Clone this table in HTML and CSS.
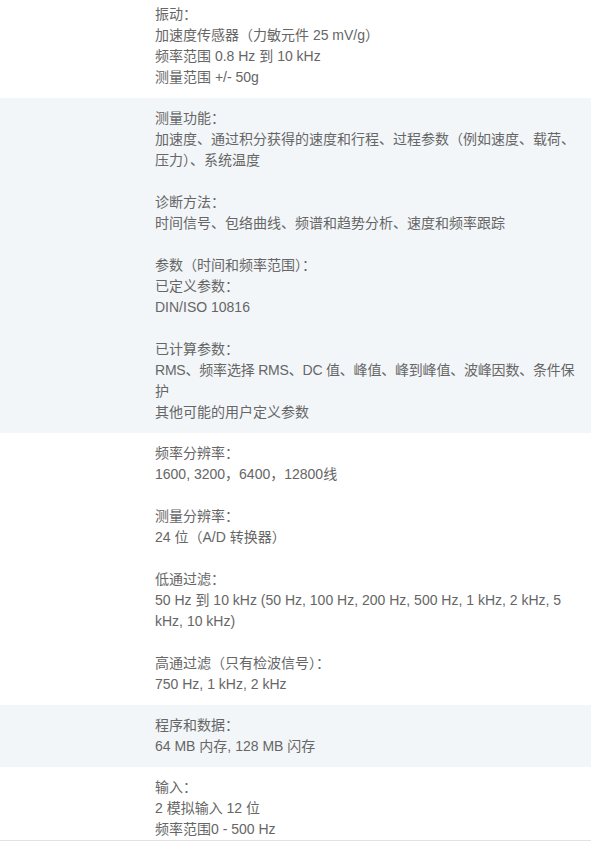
FILE: index.html
```html
<!DOCTYPE html>
<html lang="zh-CN">
  <head>
    <meta charset="UTF-8" />
    <meta name="viewport" content="width=device-width, initial-scale=1.0" />
    <title>技术参数</title>
    <link rel="stylesheet" href="styles.css">
  </head>
  <body>
    <div class="specs">
      <div class="row first">
        <div class="cell">
          振动：<br />
          加速度传感器（力敏元件 25 mV/g）<br />
          频率范围 0.8 Hz 到 10 kHz<br />
          测量范围 +/- 50g
        </div>
      </div>
      <div class="row alt">
        <div class="cell">
          <p>测量功能：<br />
          加速度、通过积分获得的速度和行程、过程参数（例如速度、载荷、压力）、系统温度</p>
          <p>诊断方法：<br />
          时间信号、包络曲线、频谱和趋势分析、速度和频率跟踪</p>
          <p>参数（时间和频率范围）：<br />
          已定义参数：<br />
          DIN/ISO 10816</p>
          <p>已计算参数：<br />
          <span class="tight">RMS、频率选择 RMS、DC 值、峰值、峰到峰值、波峰因数、条件保护</span><br />
          其他可能的用户定义参数</p>
        </div>
      </div>
      <div class="row">
        <div class="cell">
          <p>频率分辨率：<br />
          1600, 3200，6400，12800线</p>
          <p>测量分辨率：<br />
          24 位（A/D 转换器）</p>
          <p>低通过滤：<br />
          50 Hz 到 10 kHz (50 Hz, 100 Hz, 200 Hz, 500 Hz, 1 kHz, 2 kHz, 5 kHz, 10 kHz)</p>
          <p>高通过滤（只有检波信号）：<br />
          750 Hz, 1 kHz, 2 kHz</p>
        </div>
      </div>
      <div class="row alt">
        <div class="cell">
          程序和数据：<br />
          64 MB 内存, 128 MB 闪存
        </div>
      </div>
      <div class="row last">
        <div class="cell">
          输入：<br />
          2 模拟输入 12 位<br />
          频率范围0 - 500 Hz
        </div>
      </div>
    </div>
  </body>
</html>
```

FILE: styles.css
```css
body {
  margin: 0;
  background-color: #fff;
  font-family: "Liberation Sans", Arial, "Noto Sans CJK SC", sans-serif;
  font-size: 14px;
  line-height: 21px;
  color: #666;
}
.specs {
  margin-top: -6px;
}
.row {
  padding: 10px 0 10px 155px;
}
.row.alt {
  background-color: #f3f6f9;
}
.row.last {
  padding-bottom: 0;
  border-bottom: 1px solid #e2e2e2;
}
.cell {
  width: 426px;
}
.cell p {
  margin: 0 0 21px;
}
.cell p:last-child {
  margin-bottom: 0;
}
.tight {
  letter-spacing: -0.2px;
}
```
